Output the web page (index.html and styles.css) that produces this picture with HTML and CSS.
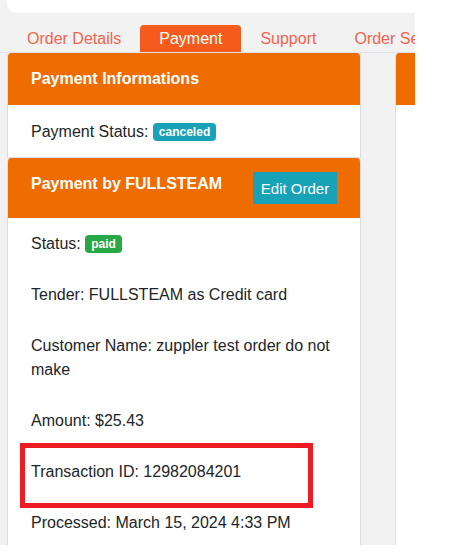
FILE: index.html
```html
<!DOCTYPE html>
<html lang="en">
<head>
    <meta charset="UTF-8">
    <meta name="viewport" content="width=device-width, initial-scale=1.0">
    <title>Order Payment</title>
    <link rel="stylesheet" href="styles.css">
</head>
<body>
    <div class="viewport">
        <div class="topbar"></div>

        <div class="tabs">
            <div class="tab">Order Details</div>
            <div class="tab active">Payment</div>
            <div class="tab">Support</div>
            <div class="tab">Order Settings</div>
        </div>

        <div class="panels">
            <div class="column">
                <div class="card">
                    <div class="card-header">Payment Informations</div>
                    <div class="card-body">
                        <p>Payment Status: <span class="badge badge-info">canceled</span></p>
                    </div>
                </div>

                <div class="card">
                    <div class="card-header split">
                        <span>Payment by FULLSTEAM</span>
                        <button class="btn-edit">Edit Order</button>
                    </div>
                    <div class="card-body list">
                        <p>Status: <span class="badge badge-success">paid</span></p>
                        <p>Tender: FULLSTEAM as Credit card</p>
                        <p>Customer Name: zuppler test order do not make</p>
                        <p>Amount: $25.43</p>
                        <p class="marked">Transaction ID: 12982084201<span class="mark-box"></span></p>
                        <p>Processed: March 15, 2024 4:33 PM</p>
                    </div>
                </div>
            </div>

            <div class="column">
                <div class="card tall">
                    <div class="card-header">&nbsp;</div>
                    <div class="card-body"></div>
                </div>
            </div>
        </div>
    </div>
</body>
</html>
```

FILE: styles.css
```css
body {
    margin: 0;
    background-color: white;
    font-family: "Liberation Sans", Arial, sans-serif;
    font-size: 16px;
    color: #212529;
}
.viewport {
    width: 415px;
    height: 545px;
    overflow: hidden;
    background-color: #f2f2f2;
}
.topbar {
    margin-left: 7px;
    height: 13px;
    background-color: white;
    border-radius: 0 0 0 9px;
}

/* tabs */
.tabs {
    display: flex;
    margin-top: 12px;
    padding-left: 8px;
    border-bottom: 1px solid #dee2e6;
    white-space: nowrap;
}
.tab {
    padding: 0 19px;
    height: 27px;
    line-height: 28px;
    color: #f3644f;
}
.tab.active {
    background-color: #f55b1d;
    color: white;
    border-radius: 4px 4px 0 0;
}

/* panels */
.panels {
    display: flex;
    gap: 34px;
    padding-left: 7px;
}
.column {
    flex: 0 0 354px;
}
.card {
    background-color: white;
    border: 1px solid #dedede;
    border-top: none;
    border-radius: 4px 4px 0 0;
    overflow: hidden;
}
.card.tall {
    height: 500px;
}
.card-header {
    background-color: #ef6c00;
    color: white;
    font-weight: bold;
    padding: 14px 23px;
    line-height: 24px;
}
.card-header.split {
    display: flex;
    justify-content: space-between;
    align-items: flex-start;
}
.btn-edit {
    width: 84px;
    height: 32px;
    padding: 0;
    border: none;
    background-color: #17a2b8;
    color: white;
    font-family: inherit;
    font-size: 15px;
}
.card-body {
    padding: 15px 23px 13px;
    line-height: 24px;
}
.card-body p {
    margin: 0;
}
.card-body.list {
    padding-top: 14px;
}
.card-body.list p {
    margin-bottom: 27px;
}

.badge {
    display: inline-block;
    padding: 0 6px;
    height: 18px;
    line-height: 18px;
    border-radius: 4px;
    font-size: 12px;
    font-weight: bold;
    color: white;
    vertical-align: 1px;
}
.badge-info {
    background-color: #17a2b8;
}
.badge-success {
    background-color: #28a745;
}

/* annotation box */
.marked {
    position: relative;
}
.mark-box {
    position: absolute;
    left: -11px;
    top: -17px;
    width: 283px;
    height: 55px;
    border: 5px solid #ed1c24;
}
```
